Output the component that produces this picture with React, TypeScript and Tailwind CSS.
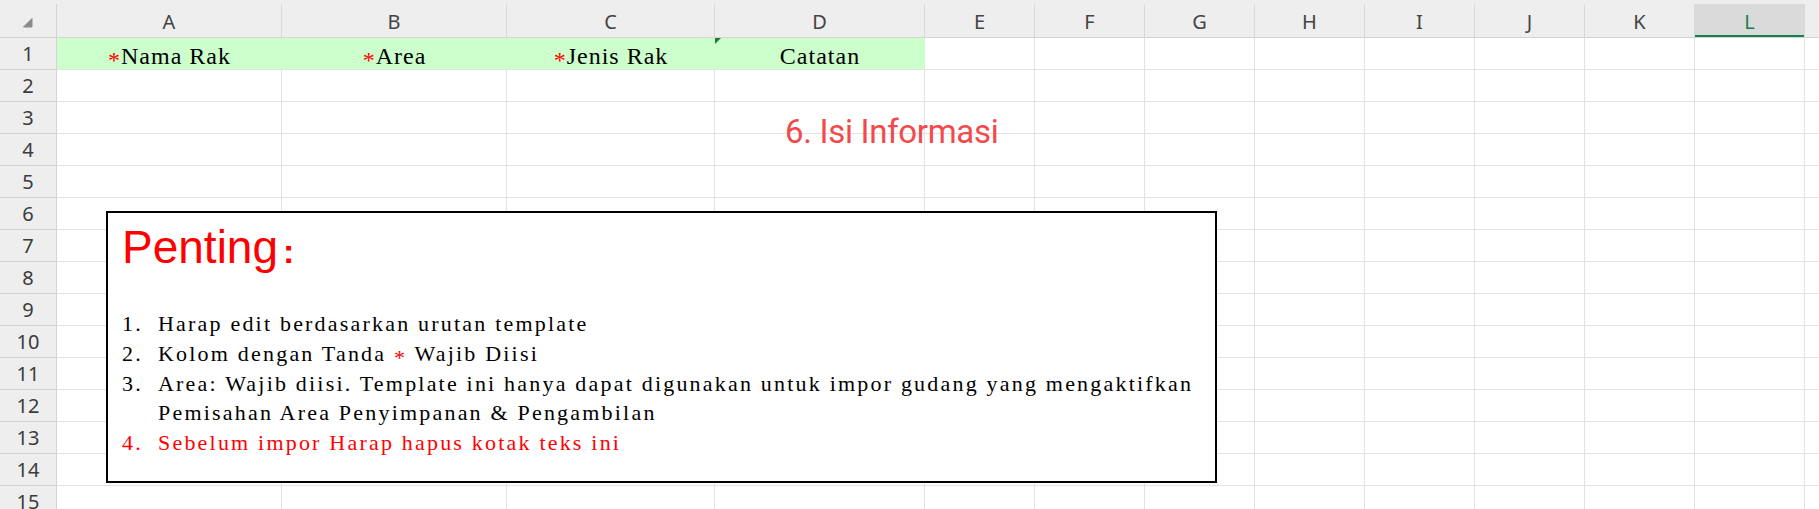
import React from 'react';

const columns = [
  { key: 'A', width: 'w-[225px]' },
  { key: 'B', width: 'w-[225px]' },
  { key: 'C', width: 'w-[208px]' },
  { key: 'D', width: 'w-[210px]' },
  { key: 'E', width: 'w-[110px]' },
  { key: 'F', width: 'w-[110px]' },
  { key: 'G', width: 'w-[110px]' },
  { key: 'H', width: 'w-[110px]' },
  { key: 'I', width: 'w-[110px]' },
  { key: 'J', width: 'w-[110px]' },
  { key: 'K', width: 'w-[110px]' },
  { key: 'L', width: 'w-[110px]' },
];

const rows = Array.from({ length: 15 }, (_, i) => i + 1);

const serif = "font-['Liberation_Serif','Noto_Sans_CJK_SC',serif]";
const ui = "font-['Noto_Sans','Liberation_Sans',sans-serif]";

function Req() {
  return <span className="relative top-[4px] text-[#ff0000]">*</span>;
}

const titles: Record<string, React.ReactNode> = {
  A: <><Req />Nama Rak</>,
  B: <><Req />Area</>,
  C: <><Req />Jenis Rak</>,
  D: <>Catatan</>,
};

function HeaderRow() {
  return (
    <div className="flex h-[34px] bg-[#eeeeee] border-b border-[#d4d4d4]">
      <div className="w-[57px] shrink-0 flex items-center justify-center pt-[4px] border-r border-[#d4d4d4]">
        <svg width="10" height="10" viewBox="0 0 10 10">
          <path d="M9 0.5 L9 9 L0.5 9 Z" fill="#8a8a8a" stroke="#8a8a8a" strokeWidth="1" strokeLinejoin="round" />
        </svg>
      </div>
      {columns.map(c => (
        <div
          key={c.key}
          className={`${c.width} shrink-0 flex items-center justify-center pt-[2px] text-[20px] ${ui} border-r border-[#d9d9d9] ${
            c.key === 'L' ? 'bg-[#dadada] text-[#15804f] shadow-[inset_0_-2px_0_#15804f]' : 'text-[#444444]'
          }`}
        >
          {c.key}
        </div>
      ))}
      <div className="flex-1" />
    </div>
  );
}

function Row({ n }: { n: number }) {
  return (
    <div className="flex h-[32px]">
      <div className={`w-[57px] shrink-0 flex items-center justify-center bg-[#eeeeee] text-[20px] text-[#3c3c3c] ${ui} border-r border-b border-[#d4d4d4]`}>
        {n}
      </div>
      {columns.map((c, i) => {
        const filled = n === 1 && i < 4;
        return (
          <div
            key={c.key}
            className={`${c.width} shrink-0 relative border-b ${
              filled
                ? `bg-[#ccffcc] border-b-[#e2e2e2] flex items-center justify-center pt-[5px] text-[24px] tracking-[1px] text-black whitespace-nowrap ${serif}`
                : 'border-r border-[#e2e2e2]'
            }`}
          >
            {filled && titles[c.key]}
            {n === 1 && c.key === 'D' && (
              <span className="absolute left-0 top-0 w-0 h-0 border-t-[6px] border-r-[6px] border-t-[#1f7a3a] border-r-transparent" />
            )}
          </div>
        );
      })}
      <div className="flex-1 border-b border-[#e2e2e2]" />
    </div>
  );
}

function Notice() {
  const item = 'flex whitespace-nowrap';
  return (
    <div className="absolute left-[106px] top-[211px] w-[1111px] h-[272px] border-2 border-black bg-white pl-[14px] pt-[11px]">
      <div className="h-[46px] font-['Liberation_Sans',sans-serif] text-[46px] leading-[46px] text-[#ff0000]">
        Penting<span className="ml-[5px] text-[34px] leading-[34px] font-bold">:</span>
      </div>
      <div className={`mt-[39px] text-[22px] leading-[29.75px] tracking-[2.2px] text-black ${serif}`}>
        <div className={item}>
          <span className="w-[36px] shrink-0">1.</span>
          <span>Harap edit berdasarkan urutan template</span>
        </div>
        <div className={item}>
          <span className="w-[36px] shrink-0">2.</span>
          <span>
            Kolom dengan Tanda <Req /> Wajib Diisi
          </span>
        </div>
        <div className={item}>
          <span className="w-[36px] shrink-0">3.</span>
          <span>
            Area: Wajib diisi. Template ini hanya dapat digunakan untuk impor gudang yang mengaktifkan
            <br />
            Pemisahan Area Penyimpanan &amp; Pengambilan
          </span>
        </div>
        <div className={`${item} text-[#ff0000]`}>
          <span className="w-[36px] shrink-0">4.</span>
          <span>Sebelum impor Harap hapus kotak teks ini</span>
        </div>
      </div>
    </div>
  );
}

export default function App() {
  return (
    <div className="relative w-[1819px] h-[509px] overflow-hidden bg-white">
      <div className="h-[4px] bg-[#eeeeee]" />
      <HeaderRow />
      {rows.map(n => (
        <Row key={n} n={n} />
      ))}

      <div className="absolute left-[785px] top-[115px] font-['Roboto','Noto_Sans',sans-serif] text-[33px] leading-[33px] tracking-[-0.3px] text-[#f24a4a] whitespace-nowrap">
        6. Isi Informasi
      </div>

      <Notice />
    </div>
  );
}
